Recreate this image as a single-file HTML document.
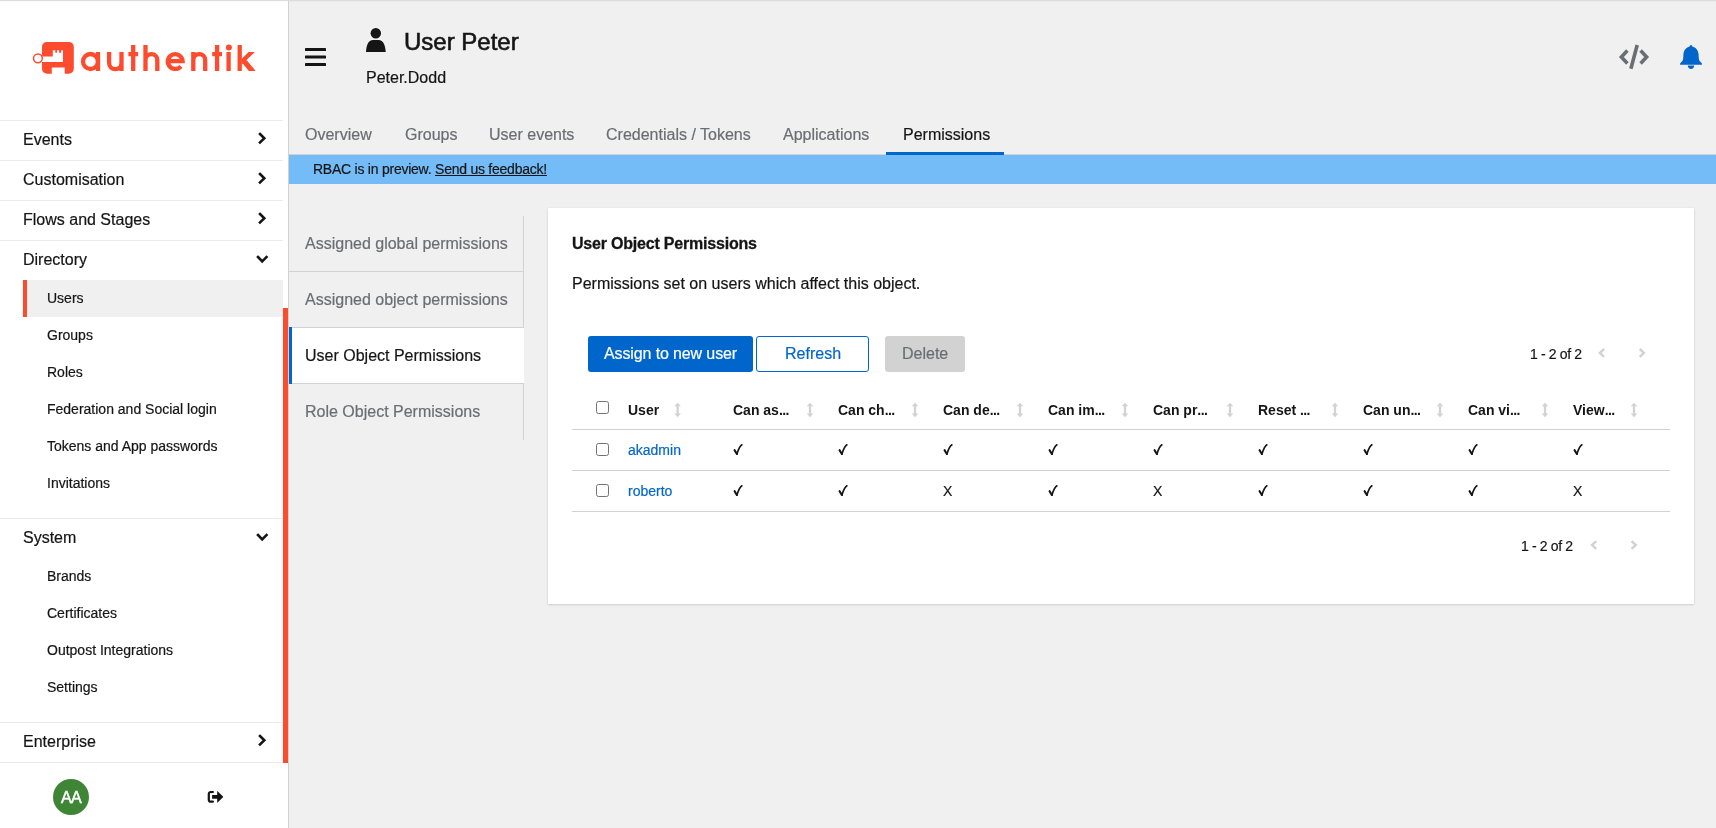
<!DOCTYPE html>
<html><head><meta charset="utf-8">
<style>
*{box-sizing:border-box;margin:0;padding:0}
html,body{-webkit-font-smoothing:antialiased;width:1716px;height:828px;overflow:hidden;background:#f0f0f0;font-family:"Liberation Sans",sans-serif;color:#151515}
.a{position:absolute}
.t{position:absolute;will-change:transform;-webkit-text-stroke:0.2px currentColor;white-space:nowrap;line-height:1}
.f16{font-size:16px}.f14{font-size:14px}
.b{font-weight:700;-webkit-text-stroke:0}
.hl{position:absolute;height:1px}
#side{position:absolute;left:0;top:0;width:288px;height:828px;background:#fff}
#sideb{position:absolute;left:288px;top:0;width:1px;height:828px;background:#d2d2d2}
.sl{position:absolute;left:0;width:283px;height:1px;background:#ececec}
.chev{position:absolute;width:12px;height:12px}
.gray{color:#6a6e73}
</style></head><body>
<!-- sidebar -->
<div id="side">
  <!-- logo -->
  <svg class="a" style="left:0;top:0" width="288" height="120" viewBox="0 0 288 120">
    <g fill="#fd4b2d">
      <path d="M47,41.9 H68.8 A5,5 0 0 1 73.8,46.9 V68.8 A5,5 0 0 1 68.8,73.8 H64.7 V67.5 H51.8 V73.8 H47 A5,5 0 0 1 42,68.8 V61.9 H63 V50.3 H61.2 V52.8 H59.1 V50.3 H57 V52.8 H55.3 V50.3 H52.8 V56.6 H42 V46.9 A5,5 0 0 1 47,41.9 Z"/>
    </g>
    <circle cx="37.9" cy="58.35" r="4.4" fill="none" stroke="#fd4b2d" stroke-width="1.5"/>
    <g fill="none" stroke="#fd4b2d" stroke-width="4.3">
      <circle cx="90.5" cy="61.5" r="7.5"/>
      <path d="M98,52 V71"/>
      <path d="M109.1,52 V63 A6.2,6.2 0 0 0 121.5,63 V52 M121.5,60 V71"/>
      <path d="M133.2,45 V71 M128.4,54.2 H138.1"/>
      <path d="M145.5,45 V71 M145.5,60 A5.9,5.9 0 0 1 157.3,60 V71"/>
      <path d="M167.8,61.2 H182.6 A7.4,7.4 0 1 0 180.9,66.3"/>
      <path d="M193.3,52 V71 M193.3,60 A5.9,5.9 0 0 1 205.2,60 V71"/>
      <path d="M217.1,45 V71 M212.2,54.2 H222"/>
      <path d="M228.6,52 V71"/>
      <path d="M239.7,45 V71"/>
    </g>
    <circle cx="228.9" cy="47.5" r="3" fill="#fd4b2d"/>
    <path d="M241.5,59 L248.6,52 L254.9,52 L241.5,64.8 Z M245.2,58.6 L255.7,71 L248.9,71 L241.8,62.4 Z" fill="#fd4b2d"/>
  </svg>
  <div class="sl" style="top:120px"></div>
  <div class="t f16" style="left:23px;top:132px">Events</div>
  <div class="sl" style="top:160px"></div>
  <div class="t f16" style="left:23px;top:172px">Customisation</div>
  <div class="sl" style="top:200px"></div>
  <div class="t f16" style="left:23px;top:212px">Flows and Stages</div>
  <div class="sl" style="top:240px"></div>
  <div class="t f16" style="left:23px;top:252px">Directory</div>
  <div class="a" style="left:23px;top:280px;width:260px;height:37px;background:#f0f0f0"></div>
  <div class="a" style="left:23px;top:280px;width:4px;height:37px;background:#fd4b2d"></div>
  <div class="t f14" style="left:47px;top:291px">Users</div>
  <div class="t f14" style="left:47px;top:328px">Groups</div>
  <div class="t f14" style="left:47px;top:365px">Roles</div>
  <div class="t f14" style="left:47px;top:402px">Federation and Social login</div>
  <div class="t f14" style="left:47px;top:439px">Tokens and App passwords</div>
  <div class="t f14" style="left:47px;top:476px">Invitations</div>
  <div class="sl" style="top:518px"></div>
  <div class="t f16" style="left:23px;top:530px">System</div>
  <div class="t f14" style="left:47px;top:569px">Brands</div>
  <div class="t f14" style="left:47px;top:606px">Certificates</div>
  <div class="t f14" style="left:47px;top:643px">Outpost Integrations</div>
  <div class="t f14" style="left:47px;top:680px">Settings</div>
  <div class="sl" style="top:722px"></div>
  <div class="t f16" style="left:23px;top:734px">Enterprise</div>
  <div class="sl" style="top:762px"></div>
  <!-- chevrons -->
  <svg class="a" style="left:0;top:0" width="288" height="828">
    <g fill="none" stroke="#151515" stroke-width="2.6" stroke-linecap="square" stroke-linejoin="miter">
      <path d="M260,134 L264.3,138.2 L260,142.5"/>
      <path d="M260,174 L264.3,178.2 L260,182.5"/>
      <path d="M260,214 L264.3,218.2 L260,222.5"/>
      <path d="M258,257 L262.2,261.3 L266.5,257"/>
      <path d="M258,535 L262.2,539.3 L266.5,535"/>
      <path d="M260,736 L264.3,740.2 L260,744.5"/>
    </g>
  </svg>
  <!-- scrollbar -->
  <div class="a" style="left:283px;top:308px;width:5px;height:455px;background:#fd4b2d"></div>
  <!-- avatar -->
  <div class="a" style="left:53px;top:779px;width:36px;height:36px;border-radius:50%;background:#3e8635"></div>
  <div class="t" style="left:60.5px;top:790px;font-size:16px;color:#fff;letter-spacing:-0.6px;-webkit-text-stroke:0.5px #fff">AA</div>
  <svg class="a" style="left:207px;top:790px" width="18" height="14" viewBox="0 0 18 14">
    <path d="M5.9,2 H3.8 A2,2 0 0 0 1.8,4 V9.7 A2,2 0 0 0 3.8,11.7 H5.9" fill="none" stroke="#151515" stroke-width="2.2" stroke-linecap="round"/>
    <path d="M5.1,5.1 H10.2 V1.3 Q10.2,0.8 10.6,1.2 L16,6.5 Q16.4,6.9 16,7.3 L10.6,12.6 Q10.2,13 10.2,12.5 V8.8 H5.1 Z" fill="#151515"/>
  </svg>
</div>
<div id="sideb"></div>
<!-- top shadow -->
<div class="a" style="left:0;top:0;width:1716px;height:1px;background:#dcdedc"></div>
<div class="a" style="left:0;top:1px;width:1716px;height:1px;background:rgba(0,0,0,0.02)"></div>

<!-- header -->
<svg class="a" style="left:305px;top:47px" width="21" height="20">
  <rect x="0" y="1" width="21" height="3" rx="0.6" fill="#151515"/>
  <rect x="0" y="8.5" width="21" height="3" rx="0.6" fill="#151515"/>
  <rect x="0" y="16" width="21" height="3" rx="0.6" fill="#151515"/>
</svg>
<svg class="a" style="left:365px;top:28px" width="22" height="25" viewBox="0 0 22 25">
  <circle cx="10.8" cy="5.2" r="5.2" fill="#151515"/>
  <path d="M1,24 C1.4,17 3.2,12 8,12 H13.6 C18.4,12 20.2,17 20.7,24 Z" fill="#151515"/>
</svg>
<div class="t" style="left:403.5px;top:30px;font-size:24px;-webkit-text-stroke:0.6px #151515">User Peter</div>
<div class="t f16" style="left:366px;top:69.5px">Peter.Dodd</div>
<!-- right icons -->
<svg class="a" style="left:1616px;top:42px" width="36" height="30" viewBox="0 0 36 30">
  <path d="M11.4,8.6 L5.4,15 L11.4,21.4" fill="none" stroke="#6a6e73" stroke-width="3.6"/>
  <path d="M24.6,8.6 L30.6,15 L24.6,21.4" fill="none" stroke="#6a6e73" stroke-width="3.6"/>
  <path d="M21.2,3 L14.9,26.8" fill="none" stroke="#6a6e73" stroke-width="3.6"/>
</svg>
<svg class="a" style="left:1678.4px;top:43px" width="26" height="28" viewBox="0 0 26 28">
  <path d="M13,2 C13.9,2 14.3,2.8 14.3,3.6 C17.8,4.4 20.3,7.3 20.6,11.5 L20.8,15.5 C21,17.5 22.2,18.8 23.5,20 C24.5,20.9 24.2,21.8 23,21.8 H3 C1.8,21.8 1.5,20.9 2.5,20 C3.8,18.8 5,17.5 5.2,15.5 L5.4,11.5 C5.7,7.3 8.2,4.4 11.7,3.6 C11.7,2.8 12.1,2 13,2 Z" fill="#0066cc"/>
  <path d="M9.8,22.6 H16.2 C16.2,24.6 14.8,26.1 13,26.1 C11.2,26.1 9.8,24.6 9.8,22.6 Z" fill="#0066cc"/>
</svg>
<!-- tabs -->
<div class="t f16 gray" style="left:305px;top:126.5px">Overview</div>
<div class="t f16 gray" style="left:404.5px;top:126.5px">Groups</div>
<div class="t f16 gray" style="left:489px;top:126.5px">User events</div>
<div class="t f16 gray" style="left:605.5px;top:126.5px">Credentials / Tokens</div>
<div class="t f16 gray" style="left:783px;top:126.5px">Applications</div>
<div class="t f16" style="left:903px;top:126.5px">Permissions</div>
<div class="a" style="left:289px;top:154px;width:1427px;height:1px;background:#d2d2d2"></div>
<div class="a" style="left:886px;top:152px;width:118px;height:3px;background:#0066cc"></div>
<!-- banner -->
<div class="a" style="left:289px;top:155px;width:1427px;height:29px;background:#73bcf7"></div>
<div class="t f14" style="left:313px;top:162px;letter-spacing:-0.24px">RBAC is in preview. <span style="text-decoration:underline">Send us feedback!</span></div>

<!-- vertical tabs -->
<div class="a" style="left:523px;top:216px;width:1px;height:224px;background:#d2d2d2"></div>
<div class="a" style="left:289px;top:271px;width:234px;height:1px;background:#d2d2d2"></div>
<div class="a" style="left:289px;top:327px;width:235px;height:57px;background:#fff;border-top:1px solid #d2d2d2;border-bottom:1px solid #d2d2d2"></div>
<div class="a" style="left:289px;top:327px;width:3px;height:57px;background:#0066cc"></div>
<div class="t f16 gray" style="left:305px;top:236px">Assigned global permissions</div>
<div class="t f16 gray" style="left:305px;top:292px">Assigned object permissions</div>
<div class="t f16" style="left:305px;top:348px">User Object Permissions</div>
<div class="t f16 gray" style="left:305px;top:404px">Role Object Permissions</div>

<!-- card -->
<div class="a" style="left:548px;top:208px;width:1146px;height:396px;background:#fff;box-shadow:0 1px 2px 0 rgba(3,3,3,.12),0 0 2px 0 rgba(3,3,3,.06)"></div>
<div class="t f16 b" style="left:572px;top:236px;letter-spacing:-0.2px;-webkit-text-stroke:0.3px #151515">User Object Permissions</div>
<div class="t f16" style="left:572px;top:275.5px">Permissions set on users which affect this object.</div>
<!-- buttons -->
<div class="a" style="left:588px;top:336px;width:165px;height:36px;background:#0066cc;border-radius:3px"></div>
<div class="t f16" style="left:603.5px;top:346px;color:#fff;letter-spacing:-0.12px">Assign to new user</div>
<div class="a" style="left:756px;top:336px;width:113px;height:36px;border:1px solid #0066cc;border-radius:3px"></div>
<div class="t f16" style="left:785px;top:346px;color:#0066cc">Refresh</div>
<div class="a" style="left:885px;top:336px;width:80px;height:36px;background:#d2d2d2;border-radius:3px"></div>
<div class="t f16" style="left:902px;top:346px;color:#6a6e73">Delete</div>

<div id="tbl">
<div class="hl" style="left:572px;top:429px;width:1098px;background:#d2d2d2"></div>
<div class="hl" style="left:572px;top:470px;width:1098px;background:#d2d2d2"></div>
<div class="hl" style="left:572px;top:511px;width:1098px;background:#d2d2d2"></div>
<div class="a" style="left:596px;top:401px;width:13px;height:13px;border:1px solid #737373;border-radius:2.5px;background:#fff"></div>
<div class="a" style="left:596px;top:443px;width:13px;height:13px;border:1px solid #737373;border-radius:2.5px;background:#fff"></div>
<div class="a" style="left:596px;top:484px;width:13px;height:13px;border:1px solid #737373;border-radius:2.5px;background:#fff"></div>
<div class="t f14 b" style="left:628px;top:403.3px">User</div>
<div class="t f14 b" style="left:733px;top:403.3px">Can as<span style="letter-spacing:-0.6px">...</span></div>
<div class="t f14 b" style="left:838px;top:403.3px">Can ch<span style="letter-spacing:-0.6px">...</span></div>
<div class="t f14 b" style="left:943px;top:403.3px">Can de<span style="letter-spacing:-0.6px">...</span></div>
<div class="t f14 b" style="left:1048px;top:403.3px">Can im<span style="letter-spacing:-0.6px">...</span></div>
<div class="t f14 b" style="left:1153px;top:403.3px">Can pr<span style="letter-spacing:-0.6px">...</span></div>
<div class="t f14 b" style="left:1258px;top:403.3px">Reset <span style="letter-spacing:-0.6px">...</span></div>
<div class="t f14 b" style="left:1363px;top:403.3px">Can un<span style="letter-spacing:-0.6px">...</span></div>
<div class="t f14 b" style="left:1468px;top:403.3px">Can vi<span style="letter-spacing:-0.6px">...</span></div>
<div class="t f14 b" style="left:1573px;top:403.3px">View<span style="letter-spacing:-0.6px">...</span></div>
<svg class="a" style="left:0;top:0" width="1716" height="828"><g fill="#d2d2d2"><path d="M677.6,402.8 L680.9,406.3 H678.75 V413.6 H680.9 L677.6,417.2 L674.3000000000001,413.6 H676.45 V406.3 H674.3000000000001 Z"/><path d="M810.0,402.8 L813.3,406.3 H811.15 V413.6 H813.3 L810.0,417.2 L806.7,413.6 H808.85 V406.3 H806.7 Z"/><path d="M915.0,402.8 L918.3,406.3 H916.15 V413.6 H918.3 L915.0,417.2 L911.7,413.6 H913.85 V406.3 H911.7 Z"/><path d="M1020.0,402.8 L1023.3,406.3 H1021.15 V413.6 H1023.3 L1020.0,417.2 L1016.7,413.6 H1018.85 V406.3 H1016.7 Z"/><path d="M1125.0,402.8 L1128.3,406.3 H1126.15 V413.6 H1128.3 L1125.0,417.2 L1121.7,413.6 H1123.85 V406.3 H1121.7 Z"/><path d="M1230.0,402.8 L1233.3,406.3 H1231.15 V413.6 H1233.3 L1230.0,417.2 L1226.7,413.6 H1228.85 V406.3 H1226.7 Z"/><path d="M1335.0,402.8 L1338.3,406.3 H1336.15 V413.6 H1338.3 L1335.0,417.2 L1331.7,413.6 H1333.85 V406.3 H1331.7 Z"/><path d="M1440.0,402.8 L1443.3,406.3 H1441.15 V413.6 H1443.3 L1440.0,417.2 L1436.7,413.6 H1438.85 V406.3 H1436.7 Z"/><path d="M1545.0,402.8 L1548.3,406.3 H1546.15 V413.6 H1548.3 L1545.0,417.2 L1541.7,413.6 H1543.85 V406.3 H1541.7 Z"/><path d="M1634.0,402.8 L1637.3,406.3 H1635.15 V413.6 H1637.3 L1634.0,417.2 L1630.7,413.6 H1632.85 V406.3 H1630.7 Z"/></g><g fill="none" stroke="#151515" stroke-linecap="round" stroke-linejoin="round"><path d="M734.6,450.2 L736.9,454" stroke-width="2.1"/><path d="M736.9,454.0 C738.2,450.0 740.1,445.8 741.9,444.8" stroke-width="1.7"/><path d="M839.6,450.2 L841.9,454" stroke-width="2.1"/><path d="M841.9,454.0 C843.2,450.0 845.1,445.8 846.9,444.8" stroke-width="1.7"/><path d="M944.6,450.2 L946.9,454" stroke-width="2.1"/><path d="M946.9,454.0 C948.2,450.0 950.1,445.8 951.9,444.8" stroke-width="1.7"/><path d="M1049.6,450.2 L1051.9,454" stroke-width="2.1"/><path d="M1051.9,454.0 C1053.2,450.0 1055.1,445.8 1056.9,444.8" stroke-width="1.7"/><path d="M1154.6,450.2 L1156.9,454" stroke-width="2.1"/><path d="M1156.9,454.0 C1158.2,450.0 1160.1,445.8 1161.9,444.8" stroke-width="1.7"/><path d="M1259.6,450.2 L1261.9,454" stroke-width="2.1"/><path d="M1261.9,454.0 C1263.2,450.0 1265.1,445.8 1266.9,444.8" stroke-width="1.7"/><path d="M1364.6,450.2 L1366.9,454" stroke-width="2.1"/><path d="M1366.9,454.0 C1368.2,450.0 1370.1,445.8 1371.9,444.8" stroke-width="1.7"/><path d="M1469.6,450.2 L1471.9,454" stroke-width="2.1"/><path d="M1471.9,454.0 C1473.2,450.0 1475.1,445.8 1476.9,444.8" stroke-width="1.7"/><path d="M1574.6,450.2 L1576.9,454" stroke-width="2.1"/><path d="M1576.9,454.0 C1578.2,450.0 1580.1,445.8 1581.9,444.8" stroke-width="1.7"/><path d="M734.6,491.2 L736.9,495" stroke-width="2.1"/><path d="M736.9,495.0 C738.2,491.0 740.1,486.8 741.9,485.8" stroke-width="1.7"/><path d="M839.6,491.2 L841.9,495" stroke-width="2.1"/><path d="M841.9,495.0 C843.2,491.0 845.1,486.8 846.9,485.8" stroke-width="1.7"/><path d="M1049.6,491.2 L1051.9,495" stroke-width="2.1"/><path d="M1051.9,495.0 C1053.2,491.0 1055.1,486.8 1056.9,485.8" stroke-width="1.7"/><path d="M1259.6,491.2 L1261.9,495" stroke-width="2.1"/><path d="M1261.9,495.0 C1263.2,491.0 1265.1,486.8 1266.9,485.8" stroke-width="1.7"/><path d="M1364.6,491.2 L1366.9,495" stroke-width="2.1"/><path d="M1366.9,495.0 C1368.2,491.0 1370.1,486.8 1371.9,485.8" stroke-width="1.7"/><path d="M1469.6,491.2 L1471.9,495" stroke-width="2.1"/><path d="M1471.9,495.0 C1473.2,491.0 1475.1,486.8 1476.9,485.8" stroke-width="1.7"/></g></svg>
<div class="t f14" style="left:628px;top:442.6px;color:#0066cc">akadmin</div>
<div class="t f14" style="left:628px;top:484px;color:#0066cc">roberto</div>
<div class="t f14" style="left:943px;top:484px">X</div>
<div class="t f14" style="left:1153px;top:484px">X</div>
<div class="t f14" style="left:1573px;top:484px">X</div>
<div class="t f14" style="left:1530px;top:347px;letter-spacing:-0.35px">1 - 2 of 2</div>
<div class="t f14" style="left:1520.5px;top:539px;letter-spacing:-0.35px">1 - 2 of 2</div>
<svg class="a" style="left:0;top:0" width="1716" height="828"><g fill="none" stroke="#d2d2d2" stroke-width="2.4"><path d="M1604.1,349 L1599.8999999999999,352.9 L1604.1,356.8"/><path d="M1596.2,541.1 L1592.0,545.0 L1596.2,548.9"/><path d="M1639.7,349 L1643.9,352.9 L1639.7,356.8"/><path d="M1631.6,541.1 L1635.8,545.0 L1631.6,548.9"/></g></svg>
</div>
</body></html>
